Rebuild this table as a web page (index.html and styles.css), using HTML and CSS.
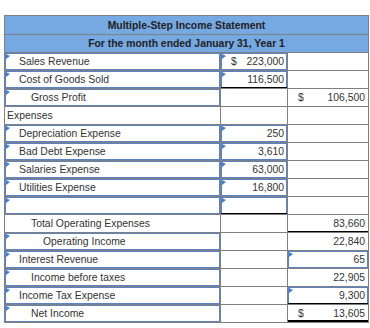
FILE: index.html
```html
<!DOCTYPE html>
<html>
<head>
<meta charset="utf-8">
<link rel="stylesheet" href="styles.css">
</head>
<body>
<div class="sheet">
  <div class="hd hd1">Multiple-Step Income Statement</div>
  <div class="hd hd2">For the month ended January 31, Year 1</div>

  <div class="c lbl inp l1">Sales Revenue</div>
  <div class="c num inp"><span class="cur">$</span><span>223,000</span></div>
  <div class="c num"></div>

  <div class="c lbl inp l1">Cost of Goods Sold</div>
  <div class="c num inp ul"><span></span><span>116,500</span></div>
  <div class="c num"></div>

  <div class="c lbl inp l2">Gross Profit</div>
  <div class="c num"></div>
  <div class="c num"><span class="cur">$</span><span>106,500</span></div>

  <div class="c lbl l0">Expenses</div>
  <div class="c num"></div>
  <div class="c num"></div>

  <div class="c lbl inp l1">Depreciation Expense</div>
  <div class="c num inp"><span></span><span>250</span></div>
  <div class="c num"></div>

  <div class="c lbl inp l1">Bad Debt Expense</div>
  <div class="c num inp"><span></span><span>3,610</span></div>
  <div class="c num"></div>

  <div class="c lbl inp l1">Salaries Expense</div>
  <div class="c num inp"><span></span><span>63,000</span></div>
  <div class="c num"></div>

  <div class="c lbl inp l1">Utilities Expense</div>
  <div class="c num inp"><span></span><span>16,800</span></div>
  <div class="c num"></div>

  <div class="c lbl inp l1"></div>
  <div class="c num inp ul"><span></span><span></span></div>
  <div class="c num"></div>

  <div class="c lbl l2">Total Operating Expenses</div>
  <div class="c num"></div>
  <div class="c num ul"><span></span><span>83,660</span></div>

  <div class="c lbl inp l3">Operating Income</div>
  <div class="c num"></div>
  <div class="c num"><span></span><span>22,840</span></div>

  <div class="c lbl inp l1">Interest Revenue</div>
  <div class="c num"></div>
  <div class="c num inp"><span></span><span>65</span></div>

  <div class="c lbl inp l2">Income before taxes</div>
  <div class="c num"></div>
  <div class="c num"><span></span><span>22,905</span></div>

  <div class="c lbl inp l1">Income Tax Expense</div>
  <div class="c num"></div>
  <div class="c num inp ul"><span></span><span>9,300</span></div>

  <div class="c lbl inp l2">Net Income</div>
  <div class="c num"></div>
  <div class="c num dul"><span class="cur">$</span><span>13,605</span></div>
</div>
</body>
</html>
```
FILE: styles.css
```css
html, body {
  margin: 0;
  padding: 0;
  background: #ffffff;
}
body {
  padding: 15px 0 0 4px;
  font-family: "Liberation Sans", Arial, sans-serif;
  font-size: 10.4px;
  color: #333333;
}
.sheet {
  display: grid;
  grid-template-columns: 215px 66px 80px;
  grid-template-rows: 18px 17px;
  grid-auto-rows: 17px;
  gap: 1px;
  padding: 1px;
  background: #808080;
  width: max-content;
}
.hd {
  grid-column: 1 / 4;
  background: #76a8e2;
  color: #222222;
  font-weight: bold;
  display: flex;
  align-items: center;
  justify-content: center;
}
.c {
  background: #ffffff;
  position: relative;
  display: flex;
  align-items: center;
  white-space: nowrap;
}
.lbl.l0 { padding-left: 2px; }
.lbl.l1 { padding-left: 14px; }
.lbl.l2 { padding-left: 26px; }
.lbl.l3 { padding-left: 38px; }
.num {
  justify-content: space-between;
  padding: 0 3px 0 10px;
}
.inp {
  box-shadow: inset 0 0 0 1px #5d82c2;
}
.inp::before {
  content: "";
  position: absolute;
  left: 1px;
  top: 1px;
  width: 0;
  height: 0;
  border-left: 4px solid #3f7fd6;
  border-top: 2px solid transparent;
  border-bottom: 3px solid transparent;
}
.ul {
  box-shadow: inset 0 -1px 0 #000000;
}
.inp.ul {
  box-shadow: inset 0 -1px 0 #000000, inset 0 0 0 1px #5d82c2;
}
.dul {
  box-shadow: inset 0 -2px 0 #000000;
}
```
